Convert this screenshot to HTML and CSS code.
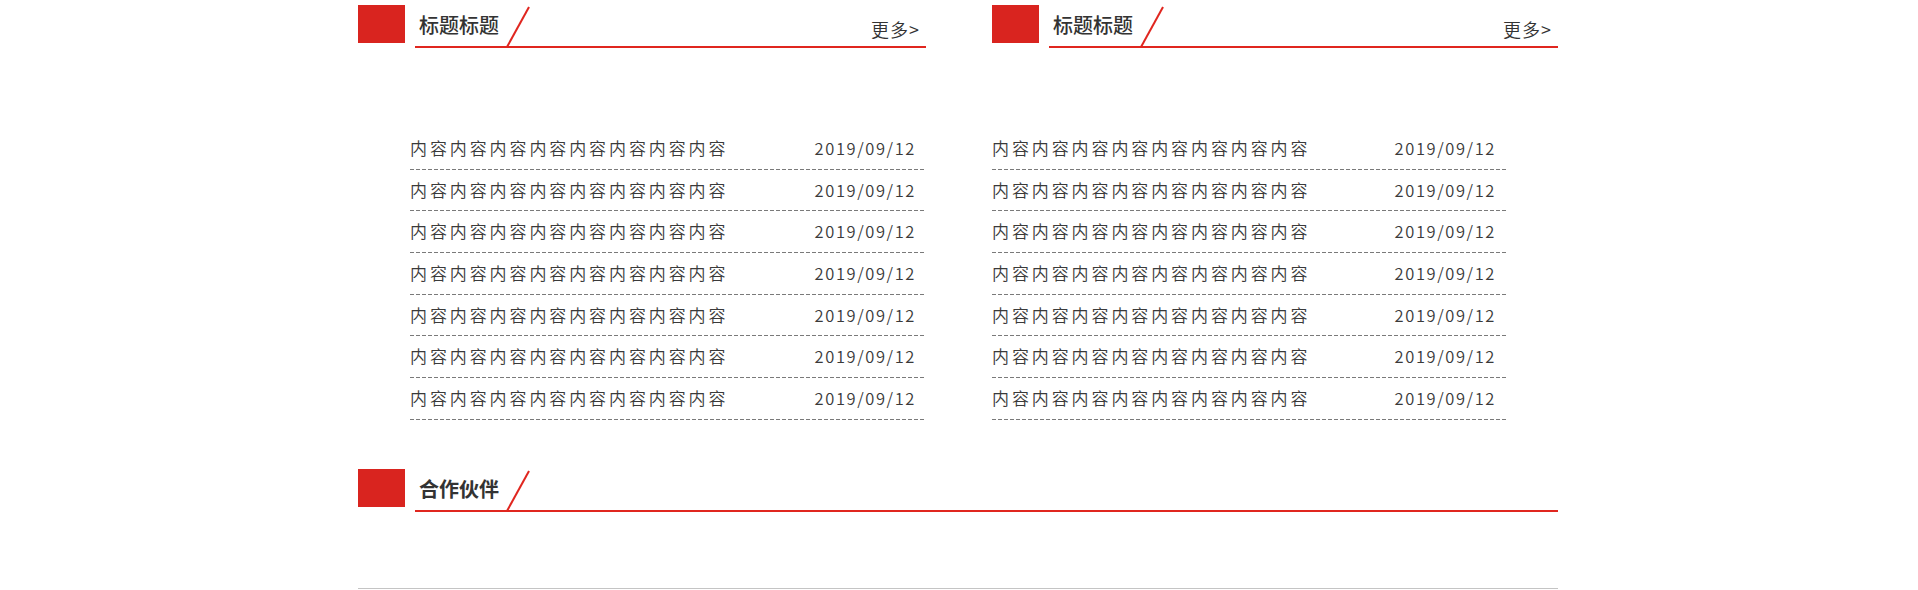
FILE: index.html
```html
<!DOCTYPE html>
<html lang="zh-CN">
<head>
<meta charset="utf-8">
<title>新闻</title>
<link rel="stylesheet" href="styles.css">
</head>
<body>
<div class="wrap">
  <div class="cols">
    <section class="col col-left">
      <div class="head">
        <span class="mark"></span>
        <div class="bar">
          <h2 class="title">标题标题</h2>
          <svg class="slash" width="24" height="43" viewBox="0 0 24 43"><line x1="1" y1="42" x2="23" y2="2" stroke="#e0261f" stroke-width="2"/></svg>
          <a class="more" href="#">更多&gt;</a>
        </div>
      </div>
      <ul class="list">
        <li><span class="txt">内容内容内容内容内容内容内容内容</span><span class="date">2019/09/12</span></li>
        <li><span class="txt">内容内容内容内容内容内容内容内容</span><span class="date">2019/09/12</span></li>
        <li><span class="txt">内容内容内容内容内容内容内容内容</span><span class="date">2019/09/12</span></li>
        <li><span class="txt">内容内容内容内容内容内容内容内容</span><span class="date">2019/09/12</span></li>
        <li><span class="txt">内容内容内容内容内容内容内容内容</span><span class="date">2019/09/12</span></li>
        <li><span class="txt">内容内容内容内容内容内容内容内容</span><span class="date">2019/09/12</span></li>
        <li><span class="txt">内容内容内容内容内容内容内容内容</span><span class="date">2019/09/12</span></li>
      </ul>
    </section>
    <section class="col col-right">
      <div class="head">
        <span class="mark"></span>
        <div class="bar">
          <h2 class="title">标题标题</h2>
          <svg class="slash" width="24" height="43" viewBox="0 0 24 43"><line x1="1" y1="42" x2="23" y2="2" stroke="#e0261f" stroke-width="2"/></svg>
          <a class="more" href="#">更多&gt;</a>
        </div>
      </div>
      <ul class="list">
        <li><span class="txt">内容内容内容内容内容内容内容内容</span><span class="date">2019/09/12</span></li>
        <li><span class="txt">内容内容内容内容内容内容内容内容</span><span class="date">2019/09/12</span></li>
        <li><span class="txt">内容内容内容内容内容内容内容内容</span><span class="date">2019/09/12</span></li>
        <li><span class="txt">内容内容内容内容内容内容内容内容</span><span class="date">2019/09/12</span></li>
        <li><span class="txt">内容内容内容内容内容内容内容内容</span><span class="date">2019/09/12</span></li>
        <li><span class="txt">内容内容内容内容内容内容内容内容</span><span class="date">2019/09/12</span></li>
        <li><span class="txt">内容内容内容内容内容内容内容内容</span><span class="date">2019/09/12</span></li>
      </ul>
    </section>
  </div>
  <section class="partners">
    <div class="head">
      <span class="mark"></span>
      <div class="bar">
        <h2 class="title">合作伙伴</h2>
        <svg class="slash" width="24" height="43" viewBox="0 0 24 43"><line x1="1" y1="42" x2="23" y2="2" stroke="#e0261f" stroke-width="2"/></svg>
      </div>
    </div>
    <div class="partner-body"></div>
  </section>
</div>
</body>
</html>
```

FILE: styles.css
```css
* { box-sizing: border-box; }
html, body { margin: 0; padding: 0; background: #fff; }
body {
  font-family: "Noto Sans CJK SC", "Noto Sans", sans-serif;
  color: #333;
}
.wrap {
  width: 1200px;
  margin: 0 0 0 calc(50% - 601px);
  padding-top: 5px;
}
.cols {
  display: flex;
  gap: 66px;
}
.col-left { width: 568px; display: flex; flex-direction: column; }
.col-right { width: 566px; display: flex; flex-direction: column; }

.head {
  display: flex;
  height: 43px;
}
.mark {
  width: 47px;
  height: 38px;
  background: #d9241f;
  flex: none;
}
.bar {
  position: relative;
  flex: 1;
  margin-left: 10px;
  border-bottom: 2px solid #e0261f;
  display: flex;
  justify-content: space-between;
  align-items: flex-start;
}
.title {
  margin: 0;
  padding: 10px 0 0 4px;
  font-size: 20px;
  line-height: 20px;
  font-weight: 500;
  color: #333;
}
.partners .title { font-weight: 700; }
.slash {
  position: absolute;
  left: 91px;
  top: 0;
  display: block;
}
.more {
  padding: 14px 6px 0 0;
  font-size: 18px;
  line-height: 20px;
  letter-spacing: 1px;
  font-weight: 350;
  color: #333;
  text-decoration: none;
}
.list {
  list-style: none;
  margin: 80px 0 0;
  padding: 0;
}
.col-left .list { width: 516px; align-self: flex-end; }
.col-right .list { width: 514px; align-self: flex-start; }
.list li {
  display: flex;
  justify-content: space-between;
  height: 41.67px;
  line-height: 40.67px;
  padding-bottom: 1px;
  background: linear-gradient(to right, #7a7a7a 4px, transparent 4px) left bottom / 6px 1px repeat-x;
  font-weight: 350;
}
.txt { font-size: 17px; letter-spacing: 2.9px; color: #3a3a3a; }
.date { font-size: 16.5px; letter-spacing: 1.6px; padding-right: 10px; color: #3a3a3a; }

.partners { margin-top: 49px; }
.partner-body {
  height: 77px;
  border-bottom: 1px solid #c4c4c4;
}
```
